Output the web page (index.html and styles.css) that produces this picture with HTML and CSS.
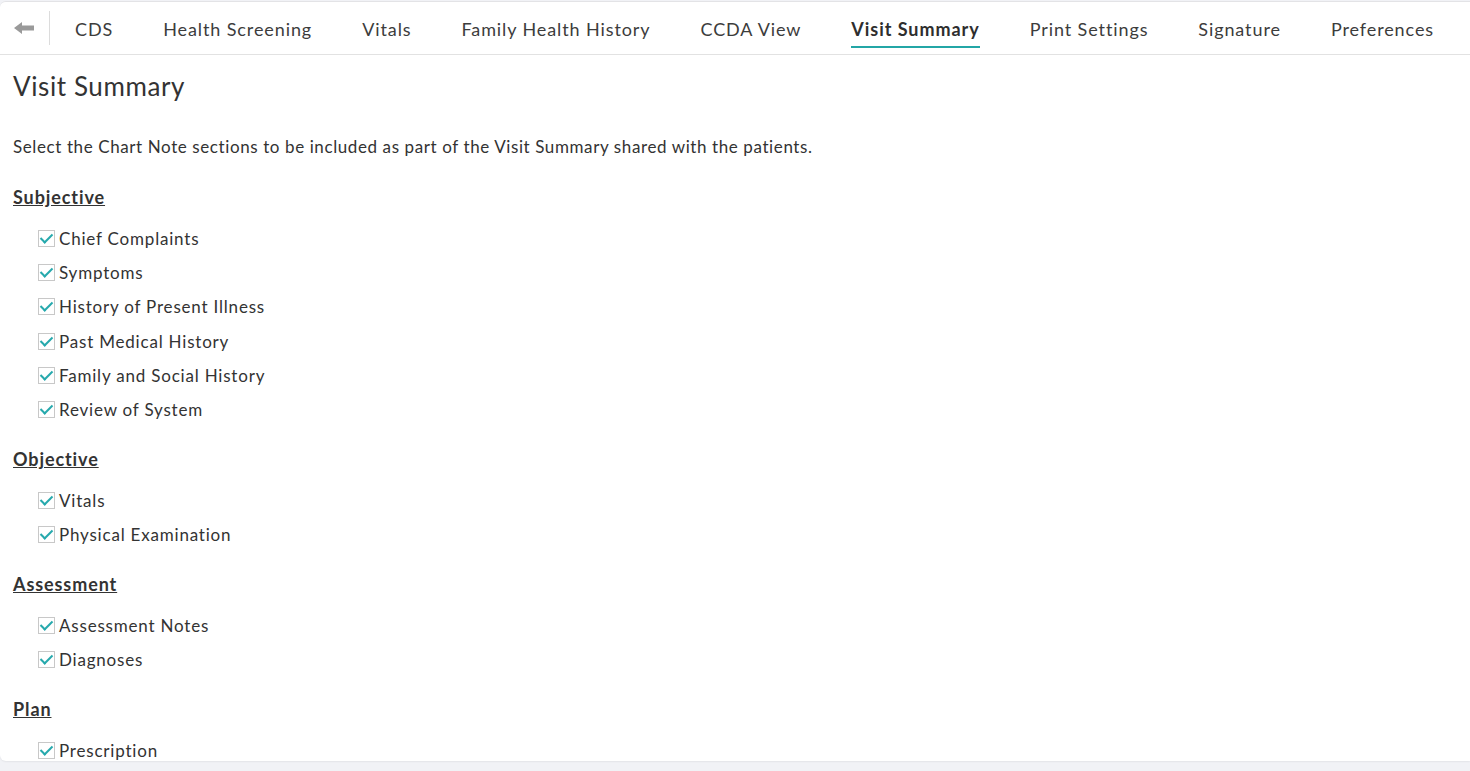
FILE: index.html
```html
<!DOCTYPE html>
<html>
<head>
<meta charset="utf-8">
<link rel="stylesheet" href="styles.css">
</head>
<body>
<div class="card">
  <nav class="tabs">
    <div class="back">
      <svg width="20" height="12" viewBox="0 0 20 12"><path d="M0 6 L8 0 L8 3.5 L20 3.5 L20 8.5 L8 8.5 L8 12 Z" fill="#9a9a9a"/></svg>
    </div>
    <div class="sep"></div>
    <a class="tab">CDS</a>
    <a class="tab">Health Screening</a>
    <a class="tab">Vitals</a>
    <a class="tab">Family Health History</a>
    <a class="tab">CCDA View</a>
    <a class="tab active">Visit Summary</a>
    <a class="tab">Print Settings</a>
    <a class="tab">Signature</a>
    <a class="tab">Preferences</a>
  </nav>
  <main class="content">
    <h1 class="title">Visit Summary</h1>
    <p class="desc">Select the Chart Note sections to be included as part of the Visit Summary shared with the patients.</p>

    <section class="group">
      <h2 class="group-title">Subjective</h2>
      <ul class="items">
        <li><span class="cb"></span>Chief Complaints</li>
        <li><span class="cb"></span>Symptoms</li>
        <li><span class="cb"></span>History of Present Illness</li>
        <li><span class="cb"></span>Past Medical History</li>
        <li><span class="cb"></span>Family and Social History</li>
        <li><span class="cb"></span>Review of System</li>
      </ul>
    </section>
    <section class="group">
      <h2 class="group-title">Objective</h2>
      <ul class="items">
        <li><span class="cb"></span>Vitals</li>
        <li><span class="cb"></span>Physical Examination</li>
      </ul>
    </section>
    <section class="group">
      <h2 class="group-title">Assessment</h2>
      <ul class="items">
        <li><span class="cb"></span>Assessment Notes</li>
        <li><span class="cb"></span>Diagnoses</li>
      </ul>
    </section>
    <section class="group">
      <h2 class="group-title">Plan</h2>
      <ul class="items">
        <li><span class="cb"></span>Prescription</li>
      </ul>
    </section>
  </main>
</div>
</body>
</html>
```
FILE: styles.css
```css
html, body {
  margin: 0;
  padding: 0;
  height: 100%;
  overflow: hidden;
}
body {
  background: #f1f2f6;
  font-family: Lato, "Open Sans", sans-serif;
  color: #333;
}
.card {
  background: #fff;
  margin-top: 1px;
  height: 759px;
  border-top: 1px solid #e3e3e6;
  border-radius: 6px 0 0 6px;
  overflow: hidden;
  box-shadow: 0 1px 2px rgba(0,0,0,0.06);
}
.tabs {
  display: flex;
  align-items: center;
  height: 52px;
  border-bottom: 1px solid #e2e2e2;
}
.back {
  width: 48px;
  display: flex;
  justify-content: center;
}
.sep {
  width: 1px;
  height: 34px;
  background: #dcdcdc;
  margin-left: 1px;
}
.tab {
  font-size: 18px;
  letter-spacing: 0.9px;
  color: #3c3c3c;
  padding: 2px 25px 0;
  height: 50px;
  display: flex;
  align-items: center;
  position: relative;
  cursor: pointer;
}
.tab.active {
  font-weight: 700;
  color: #2e2e2e;
  letter-spacing: 0.95px;
}
.tab.active::after {
  content: "";
  position: absolute;
  left: 25px;
  right: 25px;
  bottom: 6px;
  height: 2px;
  background: #23a6a6;
}
.content {
  padding: 0 13px;
}
.title {
  font-size: 26px;
  letter-spacing: 0.6px;
  font-weight: 400;
  margin: 15px 0 0;
  line-height: 32px;
  color: #333;
}
.desc {
  font-size: 17px;
  letter-spacing: 0.6px;
  margin: 34px 0 0;
  line-height: 22px;
}
.group-title {
  font-size: 18px;
  letter-spacing: 0.9px;
  font-weight: 700;
  text-decoration: underline;
  margin: 28px 0 0;
  line-height: 22px;
}
.group + .group .group-title { margin-top: 21.5px; }
.items {
  list-style: none;
  margin: 13px 0 0;
  padding: 0 0 0 25px;
}
.items li {
  display: flex;
  align-items: center;
  font-size: 17px;
  letter-spacing: 0.8px;
  height: 34.3px;
  margin: 0;
}
.cb {
  width: 15px;
  height: 15px;
  border: 1px solid #c8c8c8;
  margin-right: 4px;
  position: relative;
  flex: none;
}
.cb::after {
  content: "";
  position: absolute;
  left: 4px;
  top: 0px;
  width: 5px;
  height: 10px;
  border: solid #26a9ad;
  border-width: 0 2.5px 2.5px 0;
  transform: rotate(45deg);
}
```
